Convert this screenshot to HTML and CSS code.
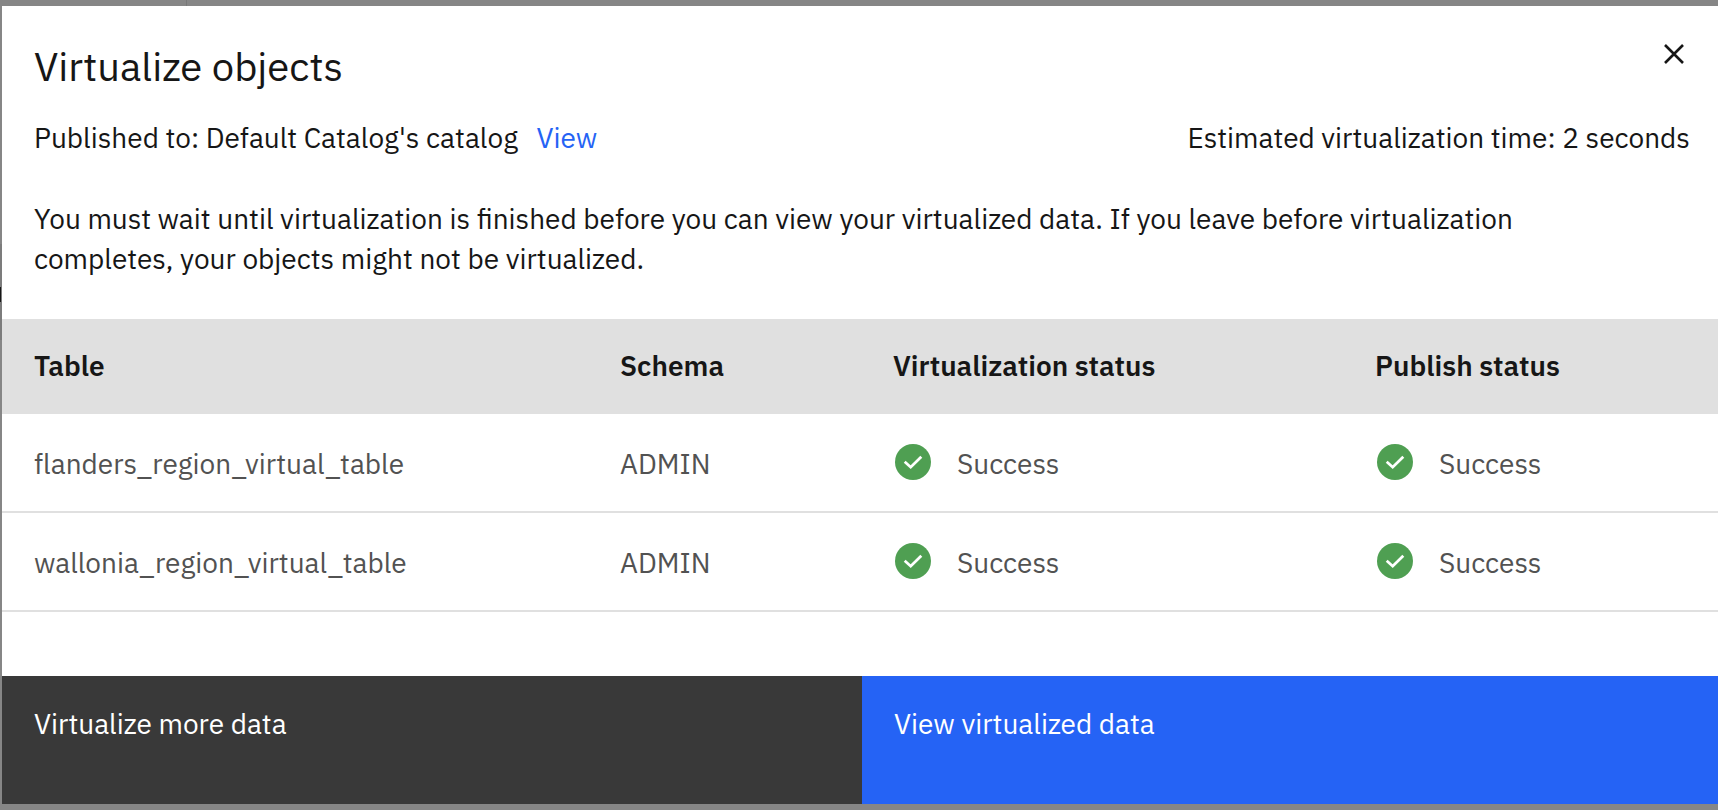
FILE: index.html
```html
<!DOCTYPE html>
<html lang="en">
<head>
<meta charset="utf-8">
<title>Virtualize objects</title>
<link rel="stylesheet" href="styles.css">
</head>
<body>
<svg class="defs" aria-hidden="true">
  <symbol id="check" viewBox="0 0 40 40">
    <circle cx="20" cy="20" r="18" fill="#4f9f52"/>
    <path d="M11.7 19.8l6 5.4L28.3 14.8" fill="none" stroke="#fff" stroke-width="2.8"/>
  </symbol>
</svg>
<main class="modal" role="dialog" aria-labelledby="title">
  <header class="header">
    <h1 class="title" id="title">Virtualize objects</h1>
    <button class="close" type="button" aria-label="Close">
      <svg class="close-icon" viewBox="0 0 20 20" aria-hidden="true"><path d="M1 1l18 18M19 1L1 19" stroke="#161616" stroke-width="2.6" fill="none"/></svg>
    </button>
  </header>
  <div class="meta">
    <p class="published">Published to: Default Catalog's catalog <a class="link" href="#catalog">View</a></p>
    <p class="estimate">Estimated virtualization time: 2 seconds</p>
  </div>
  <p class="notice">You must wait until virtualization is finished before you can view your virtualized data. If you leave before virtualization completes, your objects might not be virtualized.</p>
  <table class="objects">
    <thead>
      <tr><th class="col-table" scope="col">Table</th><th class="col-schema" scope="col">Schema</th><th class="col-virtual" scope="col">Virtualization status</th><th scope="col">Publish status</th></tr>
    </thead>
    <tbody>
      <tr>
        <td>flanders_region_virtual_table</td><td>ADMIN</td>
        <td><span class="status"><svg class="status-icon" aria-hidden="true"><use href="#check"/></svg>Success</span></td>
        <td><span class="status"><svg class="status-icon" aria-hidden="true"><use href="#check"/></svg>Success</span></td>
      </tr>
      <tr>
        <td>wallonia_region_virtual_table</td><td>ADMIN</td>
        <td><span class="status"><svg class="status-icon" aria-hidden="true"><use href="#check"/></svg>Success</span></td>
        <td><span class="status"><svg class="status-icon" aria-hidden="true"><use href="#check"/></svg>Success</span></td>
      </tr>
    </tbody>
  </table>
  <footer class="footer">
    <button class="btn btn-secondary" type="button">Virtualize more data</button>
    <button class="btn btn-primary" type="button">View virtualized data</button>
  </footer>
</main>
</body>
</html>
```
FILE: styles.css
```css
* { box-sizing: border-box; }
body {
  margin: 0;
  min-height: 100vh;
  padding: 6px 0 6px 2px;
  display: flex;
  flex-direction: column;
  /* dimmed page edges that show round the dialog */
  background:
    linear-gradient(#161616, #161616) 0 287px / 1px 15px no-repeat,
    linear-gradient(#7c7c7c, #7c7c7c) 0 244px / 2px 96px no-repeat,
    linear-gradient(#787878, #787878) 186px 0 / 1px 6px no-repeat,
    #868686;
  color: #161616;
  font-family: "IBM Plex Sans", Roboto, sans-serif;
  font-size: 28px;
  line-height: 40px;
}
h1, p { margin: 0; font-weight: 400; }
.defs { display: none; }
.modal {
  flex: 1;
  display: flex;
  flex-direction: column;
  background: #fff;
}
.header {
  display: flex;
  justify-content: space-between;
  align-items: flex-start;
  padding: 32px 32px 0;
}
.title { font-size: 40px; line-height: 56px; }
.close {
  display: flex;
  padding: 6px 2px;
  border: 0;
  background: none;
  cursor: pointer;
}
.close-icon { width: 20px; height: 20px; }
.meta {
  display: flex;
  justify-content: space-between;
  gap: 32px;
  padding: 24px 28px 0 32px;
}
.link { margin-left: 12px; color: #2563f5; text-decoration: none; }
.notice { padding: 41px 128px 0 32px; }
.objects {
  width: 100%;
  margin-top: 40px;
  table-layout: fixed;
  border-spacing: 0;
  text-align: left;
}
.col-table { width: 34.15%; }
.col-schema { width: 15.91%; }
.col-virtual { width: 28.09%; }
th {
  height: 95px;
  padding: 0 0 2px 32px;
  background: #e0e0e0;
  font-weight: 600;
}
td {
  height: 99px;
  padding: 2px 0 0 32px;
  border-bottom: 2px solid #e0e0e0;
  color: #525252;
}
.status { display: flex; align-items: center; gap: 24px; }
.status-icon { width: 40px; height: 40px; margin-bottom: 4px; }
.footer {
  display: grid;
  grid-template-columns: 50.12% 1fr;
  margin-top: auto;
}
.btn {
  display: flex;
  min-height: 128px;
  padding: 28px 32px;
  border: 0;
  color: #fff;
  font: inherit;
  text-align: left;
  cursor: pointer;
}
.btn-secondary { background: #393939; }
.btn-primary { background: #2563f5; }
```
